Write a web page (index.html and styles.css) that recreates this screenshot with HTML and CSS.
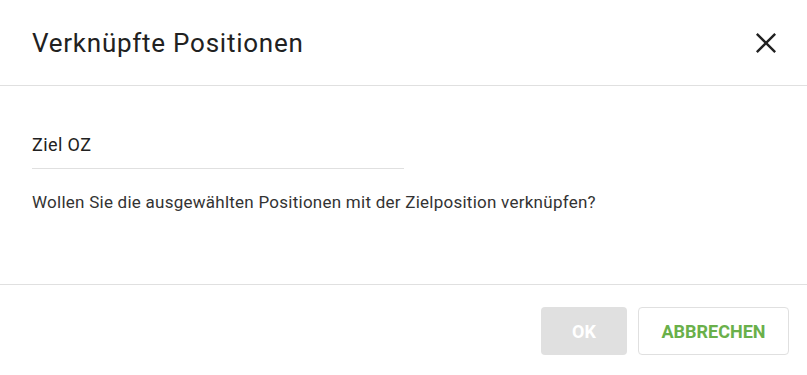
FILE: index.html
```html
<!DOCTYPE html>
<html lang="de">
<head>
<meta charset="utf-8">
<link rel="stylesheet" href="styles.css">
</head>
<body>
<div class="dialog">
  <header class="head">
    <h1 class="title">Verknüpfte Positionen</h1>
    <button class="close" aria-label="Schließen">
      <svg width="24" height="24" viewBox="0 0 24 24"><path d="M2 2L22 22M22 2L2 22" stroke="#212121" stroke-width="2.6" fill="none"/></svg>
    </button>
  </header>
  <main class="body">
    <div class="field">Ziel OZ</div>
    <p class="msg">Wollen Sie die ausgewählten Positionen mit der Zielposition verknüpfen?</p>
  </main>
  <footer class="foot">
    <button class="btn btn-ok" disabled>OK</button>
    <button class="btn btn-cancel">ABBRECHEN</button>
  </footer>
</div>
</body>
</html>
```
FILE: styles.css
```css
* { box-sizing: border-box; }
html, body { margin: 0; padding: 0; background: #fff; }
body { font-family: Roboto, "Noto Sans", sans-serif; color: #212121; }
.dialog { width: 807px; height: 375px; display: flex; flex-direction: column; }
.head {
  height: 86px;
  border-bottom: 1px solid #e0e0e0;
  display: flex;
  align-items: center;
  justify-content: space-between;
  padding: 0 30px 0 32px;
}
.title { margin: 0; font-size: 26px; font-weight: 400; color: #212121; line-height: 1; letter-spacing: 0.75px; }
.close { border: 0; background: none; padding: 0; width: 22px; height: 22px; display: flex; cursor: pointer; }
.close svg { width: 22px; height: 22px; }
.body { height: 199px; border-bottom: 1px solid #e0e0e0; padding: 47px 32px 0; }
.field {
  width: 372px;
  font-size: 18px;
  letter-spacing: 0.4px;
  line-height: 24px;
  padding-bottom: 11px;
  border-bottom: 1px solid #e0e0e0;
  color: #212121;
}
.msg { margin: 23px 0 0; font-size: 17px; letter-spacing: 0.25px; line-height: 20px; color: #333; }
.foot { flex: 1; display: flex; justify-content: flex-end; align-items: flex-start; gap: 11px; padding: 22px 18px 0 0; }
.btn {
  height: 48px;
  border-radius: 4px;
  font-family: Roboto, "Noto Sans", sans-serif;
  font-weight: 700;
  font-size: 18px;
  letter-spacing: 0;
}
.btn-ok { width: 86px; background: #e0e0e0; border: 0; color: #fff; }
.btn-cancel { width: 151px; background: #fff; border: 1px solid #e0e0e0; color: #6ab04a; }
```
